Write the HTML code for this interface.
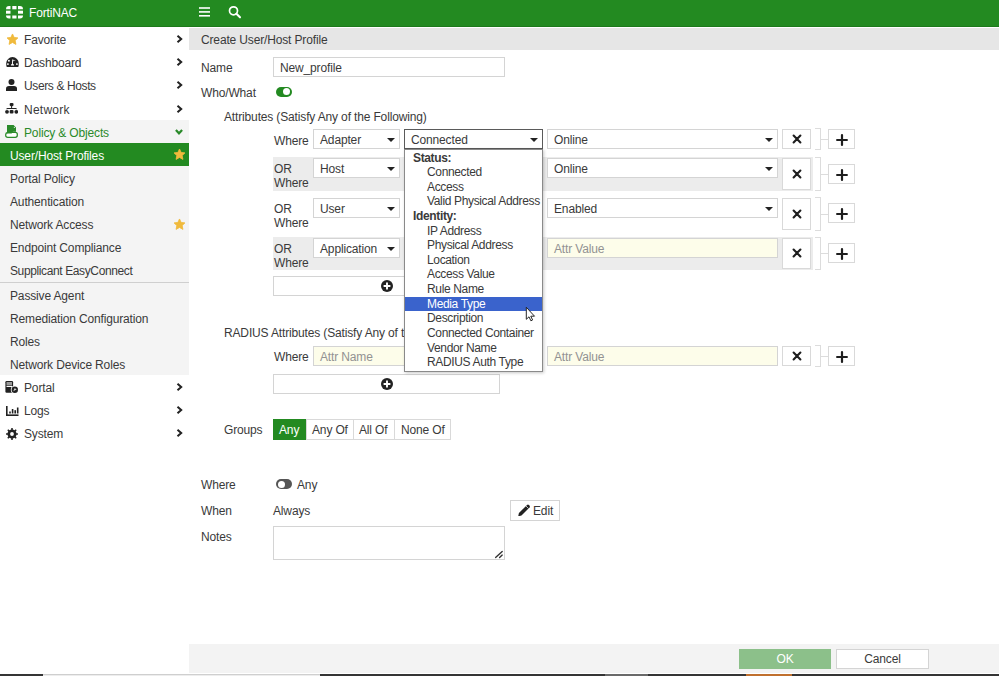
<!DOCTYPE html>
<html><head><meta charset="utf-8">
<style>
*{box-sizing:border-box;margin:0;padding:0}
html,body{width:999px;height:676px;overflow:hidden;background:#fff}
body{position:relative;font-family:"Liberation Sans",sans-serif;font-size:12px;color:#3a3a3a;letter-spacing:-0.15px}
.a{position:absolute}
.t{position:absolute;white-space:nowrap;line-height:14px}
#hdr{left:0;top:0;width:999px;height:27px;background:#238a21;border-bottom:1px solid #1d7a1b}
#side{left:0;top:28px;width:189px;height:648px;background:#fff}
.row{position:absolute;left:0;width:189px;height:23px}
.row .t{top:6px}
.sub{background:#f4f4f4}
.r1 .t{top:5px!important}
.chev{position:absolute;left:176px;top:8px;width:7px;height:8px}
.r1 .chev{top:7px}
.sel{background:#fff;border:1px solid #d4d4d4;position:absolute;height:20px}
.sel .t{top:3px;left:6px}
.caret{position:absolute;right:4px;top:8px;width:0;height:0;border-left:4px solid transparent;border-right:4px solid transparent;border-top:4px solid #222}
.inp{position:absolute;height:20px;border:1px solid #d4d4d4;background:#fdfdea}
.inp .t{top:3px;left:6px;color:#929292}
.xb{position:absolute;left:782px;width:29px;border:1px solid #d9d9d9;background:#fff}
.pb{position:absolute;left:828px;width:27px;height:20px;border:1px solid #d9d9d9;background:#fff}
.brk{position:absolute;left:815px;width:6px;border:1px solid #dcdcdc;border-left:none}
.mid{position:absolute;left:821px;width:7px;height:1px;background:#dcdcdc}
.grow{position:absolute;left:273px;width:540px;background:#ececec}
.dd .t{left:22px;font-size:12px;letter-spacing:-0.35px}
</style></head><body>

<!-- header -->
<div id="hdr" class="a">
  <svg class="a" style="left:5.5px;top:5.5px" width="17" height="13" viewBox="0 0 17 13">
    <g fill="#fff">
      <path d="M0 3.3 Q0 0 3 0 H4.5 V3.3Z"/>
      <rect x="6.3" y="0" width="4.2" height="3.3"/>
      <path d="M12 0 H13.8 Q17 0 17 3.3 H12Z"/>
      <rect x="0" y="4.7" width="4.5" height="3"/>
      <rect x="12" y="4.7" width="5" height="3"/>
      <path d="M0 9.5 H4.5 V12.5 H3 Q0 12.5 0 9.5Z"/>
      <rect x="6.3" y="9.5" width="4.2" height="3"/>
      <path d="M12 9.5 H17 Q17 12.5 14 12.5 H12Z"/>
    </g>
  </svg>
  <div class="t" style="left:29px;top:6px;color:#fff;font-size:12px">FortiNAC</div>
  <svg class="a" style="left:199px;top:7px" width="11" height="10" viewBox="0 0 11 10"><g fill="#fff"><rect x="0" y="0.2" width="11" height="1.6"/><rect x="0" y="4.1" width="11" height="1.6"/><rect x="0" y="8" width="11" height="1.6"/></g></svg>
  <svg class="a" style="left:228px;top:5px" width="14" height="14" viewBox="0 0 14 14"><circle cx="5.5" cy="5.8" r="4" fill="none" stroke="#fff" stroke-width="1.7"/><path d="M8.4 8.7 L12 12.3" stroke="#fff" stroke-width="2.1" stroke-linecap="round"/></svg>
</div>

<!-- sidebar -->
<div id="side" class="a"></div>
<div class="row r1" style="top:28px"><svg class="a" style="left:6px;top:5px" width="13" height="13" viewBox="0 0 24 24"><path stroke-linejoin="round" stroke-width="1.6" stroke="#f0ba3c" d="M12 1.8 L15 8.2 L22 9 L16.9 13.9 L18.3 21 L12 17.4 L5.7 21 L7.1 13.9 L2 9 L9 8.2Z" fill="#f0ba3c"/></svg><div class="t" style="left:24px">Favorite</div><svg class="chev" viewBox="0 0 7 8"><path d="M1.5 0.8 L5.2 4 L1.5 7.2" fill="none" stroke="#222" stroke-width="2"/></svg></div>
<div class="row r1" style="top:51px"><svg class="a" style="left:5.5px;top:6px" width="13" height="10" viewBox="0 0 13 10"><path d="M0.2 6.4 A6.3 6.3 0 0 1 12.8 6.4 Q12.8 8.6 12.2 10 H0.8 Q0.2 8.6 0.2 6.4Z" fill="#222"/><g fill="#fff"><circle cx="2.9" cy="3.7" r="0.95"/><circle cx="1.9" cy="7.1" r="0.95"/><circle cx="10.9" cy="7.1" r="0.95"/><path d="M6.2 2.4 L7.2 2.4 L6.9 6.8 Q8.2 7.4 8.1 8.6 H4.9 Q4.8 7.4 6 6.8Z"/><path d="M7 2.8 L9.8 3.6 L7 4.2Z" fill="#bbb"/></g></svg><div class="t" style="left:24px">Dashboard</div><svg class="chev" viewBox="0 0 7 8"><path d="M1.5 0.8 L5.2 4 L1.5 7.2" fill="none" stroke="#222" stroke-width="2"/></svg></div>
<div class="row r1" style="top:74px"><svg class="a" style="left:6px;top:5px" width="11" height="12" viewBox="0 0 11 12"><circle cx="5.5" cy="3" r="3" fill="#222"/><path d="M0 12 V9.5 Q0 7 3 7 H8 Q11 7 11 9.5 V12Z" fill="#222"/></svg><div class="t" style="left:24px;letter-spacing:-0.38px">Users &amp; Hosts</div><svg class="chev" viewBox="0 0 7 8"><path d="M1.5 0.8 L5.2 4 L1.5 7.2" fill="none" stroke="#222" stroke-width="2"/></svg></div>
<div class="row" style="top:97px"><svg class="a" style="left:5px;top:5px" width="13" height="12" viewBox="0 0 13 12"><g fill="#222"><rect x="4.7" y="0.9" width="3.8" height="3.3" rx="1.1"/><rect x="6.1" y="4" width="1" height="2.5"/><path d="M1.3 7.3 Q1.3 6 2.6 6 H10.6 Q11.9 6 11.9 7.3 H10.9 Q10.9 7 10.6 7 H2.6 Q2.3 7 2.3 7.3Z"/><circle cx="2" cy="9.8" r="1.9"/><rect x="4.7" y="8" width="3.8" height="3.5" rx="1.1"/><circle cx="11.3" cy="9.8" r="1.9"/></g></svg><div class="t" style="left:24px;letter-spacing:0.25px">Network</div><svg class="chev" viewBox="0 0 7 8"><path d="M1.5 0.8 L5.2 4 L1.5 7.2" fill="none" stroke="#222" stroke-width="2"/></svg></div>
<div class="row sub" style="top:120px"><svg class="a" style="left:5px;top:5px" width="13" height="13" viewBox="0 0 13 13"><path d="M3 7.3 H10.3 Q12.3 7.3 12.3 9.3 V10.3 Q12.3 12.3 10.3 12.3 H2.7 Q0.7 12.3 0.7 10.3 V9.8 Q0.7 8 2.5 7.5" fill="#fff" stroke="#2a8a2a" stroke-width="1.3"/><path d="M2 0 H8.6 L11 2.4 V6.8 H8.2 Q7.6 6.8 7.2 7.6 L6.7 8.5 H2Z" fill="#2a8a2a"/><circle cx="9.4" cy="2.4" r="0.6" fill="#cfe8cf"/></svg><div class="t" style="left:24px;color:#2a8a2a">Policy &amp; Objects</div><svg class="chev" style="left:175px;top:9px;width:8px;height:6px" viewBox="0 0 8 6"><path d="M0.9 1 L4 4.3 L7.1 1" fill="none" stroke="#2a8a2a" stroke-width="2.2"/></svg></div>
<div class="row" style="top:143px;background:#238a21"><div class="t" style="left:10px;color:#fff">User/Host Profiles</div><svg class="a" style="left:173px;top:5px" width="13" height="13" viewBox="0 0 24 24"><path stroke-linejoin="round" stroke-width="1.6" stroke="#f0ba3c" d="M12 1.8 L15 8.2 L22 9 L16.9 13.9 L18.3 21 L12 17.4 L5.7 21 L7.1 13.9 L2 9 L9 8.2Z" fill="#f0ba3c"/></svg></div>
<div class="row sub" style="top:166px"><div class="t" style="left:10px">Portal Policy</div></div>
<div class="row sub" style="top:189px"><div class="t" style="left:10px">Authentication</div></div>
<div class="row sub" style="top:212px"><div class="t" style="left:10px">Network Access</div><svg class="a" style="left:173px;top:6px" width="13" height="13" viewBox="0 0 24 24"><path stroke-linejoin="round" stroke-width="1.6" stroke="#f0ba3c" d="M12 1.8 L15 8.2 L22 9 L16.9 13.9 L18.3 21 L12 17.4 L5.7 21 L7.1 13.9 L2 9 L9 8.2Z" fill="#f0ba3c"/></svg></div>
<div class="row sub" style="top:235px"><div class="t" style="left:10px">Endpoint Compliance</div></div>
<div class="row sub" style="top:258px"><div class="t" style="left:10px;letter-spacing:-0.38px">Supplicant EasyConnect</div></div>
<div class="row sub" style="top:281px;height:2px;border-bottom:1px solid #cfcfcf"></div>
<div class="row sub" style="top:283px"><div class="t" style="left:10px">Passive Agent</div></div>
<div class="row sub" style="top:306px"><div class="t" style="left:10px">Remediation Configuration</div></div>
<div class="row sub" style="top:329px"><div class="t" style="left:10px">Roles</div></div>
<div class="row sub" style="top:352px"><div class="t" style="left:10px">Network Device Roles</div></div>
<div class="row" style="top:375px"><svg class="a" style="left:5px;top:5px" width="14" height="14" viewBox="0 0 14 14"><rect x="0.4" y="1" width="7.7" height="11.7" rx="1.2" fill="#222"/><rect x="1.5" y="2" width="5.5" height="3.5" fill="#9a9a9a"/><rect x="1.5" y="6" width="5.5" height="1" fill="#fff"/><circle cx="9.8" cy="9.8" r="4" fill="#fff"/><circle cx="9.8" cy="9.8" r="3.2" fill="#222"/><path d="M8.3 11.3 L9.6 8.2 L11.6 9.2Z" fill="#ddd"/></svg><div class="t" style="left:24px">Portal</div><svg class="chev" viewBox="0 0 7 8"><path d="M1.5 0.8 L5.2 4 L1.5 7.2" fill="none" stroke="#222" stroke-width="2"/></svg></div>
<div class="row" style="top:398px"><svg class="a" style="left:5.5px;top:7.5px" width="13" height="10" viewBox="0 0 13 10"><g fill="#222"><rect x="0" y="0" width="1.6" height="10"/><rect x="0" y="8.4" width="12.5" height="1.6"/><rect x="3.2" y="5.5" width="1.6" height="2"/><rect x="5.8" y="3" width="1.6" height="4.5"/><rect x="8.4" y="4.2" width="1.6" height="3.3"/><rect x="10.9" y="1.5" width="1.6" height="6"/></g></svg><div class="t" style="left:24px">Logs</div><svg class="chev" viewBox="0 0 7 8"><path d="M1.5 0.8 L5.2 4 L1.5 7.2" fill="none" stroke="#222" stroke-width="2"/></svg></div>
<div class="row" style="top:421px"><svg class="a" style="left:5.5px;top:6.5px" width="12" height="12" viewBox="0 0 12 12"><path fill="#222" fill-rule="evenodd" d="M10.53 5.21 L11.95 5.25 L11.95 6.75 L10.53 6.79 L9.76 8.65 L10.74 9.68 L9.68 10.74 L8.65 9.76 L6.79 10.53 L6.75 11.95 L5.25 11.95 L5.21 10.53 L3.35 9.76 L2.32 10.74 L1.26 9.68 L2.24 8.65 L1.47 6.79 L0.05 6.75 L0.05 5.25 L1.47 5.21 L2.24 3.35 L1.26 2.32 L2.32 1.26 L3.35 2.24 L5.21 1.47 L5.25 0.05 L6.75 0.05 L6.79 1.47 L8.65 2.24 L9.68 1.26 L10.74 2.32 L9.76 3.35Z M7.90 6.0 A1.9 1.9 0 1 0 4.10 6.0 A1.9 1.9 0 1 0 7.90 6.0Z"/></svg><div class="t" style="left:24px">System</div><svg class="chev" viewBox="0 0 7 8"><path d="M1.5 0.8 L5.2 4 L1.5 7.2" fill="none" stroke="#222" stroke-width="2"/></svg></div>

<div class="a" style="left:189px;top:28px;width:810px;height:22px;background:#e6e6e6"><div class="t" style="left:12px;top:5px">Create User/Host Profile</div></div>
<div class="t" style="left:201px;top:61px">Name</div>
<div class="a" style="left:273px;top:57px;width:232px;height:20px;border:1px solid #d4d4d4"><div class="t" style="left:6px;top:3px">New_profile</div></div>
<div class="t" style="left:201px;top:86px">Who/What</div>
<div class="a" style="left:276px;top:86.5px;width:16px;height:10px;border-radius:5px;background:#238a21"><div class="a" style="left:7px;top:1.5px;width:7px;height:7px;border-radius:50%;background:#fff"></div></div>
<div class="t" style="left:224px;top:110px">Attributes (Satisfy Any of the Following)</div>
<div class="t" style="left:274px;top:133.5px">Where</div>
<div class="sel" style="left:313px;top:129px;width:87px;height:20px;border-color:#d4d4d4"><div class="t">Adapter</div><div class="caret"></div></div>
<div class="sel" style="left:404px;top:129px;width:139px;height:20px;border-color:#5a5a5a"><div class="t">Connected</div><div class="caret"></div></div>
<div class="sel" style="left:547px;top:129px;width:231px;height:20px;border-color:#d4d4d4"><div class="t">Online</div><div class="caret"></div></div>
<div class="xb" style="top:129px;height:20px"><svg class="a" style="left:9px;top:4px" width="10" height="10" viewBox="0 0 10 10"><path d="M1.6 1.6 L8.4 8.4 M8.4 1.6 L1.6 8.4" stroke="#1e1e1e" stroke-width="2.1" stroke-linecap="round"/></svg></div><div class="brk" style="top:128px;height:22px"></div><div class="mid" style="top:139px"></div><div class="pb" style="top:129px"><svg class="a" style="left:7px;top:4px" width="12" height="12" viewBox="0 0 12 12"><path d="M6 1.1 V10.9 M1.1 6 H10.9" stroke="#1e1e1e" stroke-width="2.2" stroke-linecap="round"/></svg></div>
<div class="grow" style="top:157px;height:34px"></div>
<div class="t" style="left:274px;top:163px;line-height:13.6px">OR<br>Where</div>
<div class="sel" style="left:313px;top:158px;width:87px;height:20px;border-color:#d4d4d4"><div class="t">Host</div><div class="caret"></div></div>
<div class="sel" style="left:547px;top:158px;width:231px;height:20px;border-color:#d4d4d4"><div class="t">Online</div><div class="caret"></div></div>
<div class="xb" style="top:158px;height:32px"><svg class="a" style="left:9px;top:10px" width="10" height="10" viewBox="0 0 10 10"><path d="M1.6 1.6 L8.4 8.4 M8.4 1.6 L1.6 8.4" stroke="#1e1e1e" stroke-width="2.1" stroke-linecap="round"/></svg></div><div class="brk" style="top:157px;height:34px"></div><div class="mid" style="top:174px"></div><div class="pb" style="top:164px"><svg class="a" style="left:7px;top:4px" width="12" height="12" viewBox="0 0 12 12"><path d="M6 1.1 V10.9 M1.1 6 H10.9" stroke="#1e1e1e" stroke-width="2.2" stroke-linecap="round"/></svg></div>
<div class="t" style="left:274px;top:203px;line-height:13.6px">OR<br>Where</div>
<div class="sel" style="left:313px;top:198px;width:87px;height:20px;border-color:#d4d4d4"><div class="t">User</div><div class="caret"></div></div>
<div class="sel" style="left:547px;top:198px;width:231px;height:20px;border-color:#d4d4d4"><div class="t">Enabled</div><div class="caret"></div></div>
<div class="xb" style="top:198px;height:32px"><svg class="a" style="left:9px;top:10px" width="10" height="10" viewBox="0 0 10 10"><path d="M1.6 1.6 L8.4 8.4 M8.4 1.6 L1.6 8.4" stroke="#1e1e1e" stroke-width="2.1" stroke-linecap="round"/></svg></div><div class="brk" style="top:197px;height:34px"></div><div class="mid" style="top:214px"></div><div class="pb" style="top:203px"><svg class="a" style="left:7px;top:4px" width="12" height="12" viewBox="0 0 12 12"><path d="M6 1.1 V10.9 M1.1 6 H10.9" stroke="#1e1e1e" stroke-width="2.2" stroke-linecap="round"/></svg></div>
<div class="grow" style="top:237px;height:33px"></div>
<div class="t" style="left:274px;top:243px;line-height:13.6px">OR<br>Where</div>
<div class="sel" style="left:313px;top:238px;width:87px;height:20px;border-color:#d4d4d4"><div class="t">Application</div><div class="caret"></div></div>
<div class="inp" style="left:547px;top:238px;width:231px"><div class="t">Attr Value</div></div>
<div class="xb" style="top:238px;height:31px"><svg class="a" style="left:9px;top:9px" width="10" height="10" viewBox="0 0 10 10"><path d="M1.6 1.6 L8.4 8.4 M8.4 1.6 L1.6 8.4" stroke="#1e1e1e" stroke-width="2.1" stroke-linecap="round"/></svg></div><div class="brk" style="top:237px;height:33px"></div><div class="mid" style="top:253px"></div><div class="pb" style="top:243px"><svg class="a" style="left:7px;top:4px" width="12" height="12" viewBox="0 0 12 12"><path d="M6 1.1 V10.9 M1.1 6 H10.9" stroke="#1e1e1e" stroke-width="2.2" stroke-linecap="round"/></svg></div>
<div class="a" style="left:273px;top:276px;width:227px;height:20px;border:1px solid #d4d4d4"><svg class="a" style="left:107px;top:3px" width="12" height="12" viewBox="0 0 12 12"><circle cx="6" cy="6" r="6" fill="#222"/><path d="M6 2.6 V9.4 M2.6 6 H9.4" stroke="#fff" stroke-width="1.9"/></svg></div>
<div class="t" style="left:224px;top:326px">RADIUS Attributes (Satisfy Any of the Following)</div>
<div class="t" style="left:274px;top:350px">Where</div>
<div class="inp" style="left:313px;top:346px;width:230px"><div class="t">Attr Name</div></div>
<div class="inp" style="left:547px;top:346px;width:231px"><div class="t">Attr Value</div></div>
<div class="xb" style="top:346px;height:20px"><svg class="a" style="left:9px;top:4px" width="10" height="10" viewBox="0 0 10 10"><path d="M1.6 1.6 L8.4 8.4 M8.4 1.6 L1.6 8.4" stroke="#1e1e1e" stroke-width="2.1" stroke-linecap="round"/></svg></div><div class="brk" style="top:345px;height:22px"></div><div class="mid" style="top:356px"></div><div class="pb" style="top:346px"><svg class="a" style="left:7px;top:4px" width="12" height="12" viewBox="0 0 12 12"><path d="M6 1.1 V10.9 M1.1 6 H10.9" stroke="#1e1e1e" stroke-width="2.2" stroke-linecap="round"/></svg></div>
<div class="a" style="left:273px;top:374px;width:227px;height:20px;border:1px solid #d4d4d4"><svg class="a" style="left:107px;top:3px" width="12" height="12" viewBox="0 0 12 12"><circle cx="6" cy="6" r="6" fill="#222"/><path d="M6 2.6 V9.4 M2.6 6 H9.4" stroke="#fff" stroke-width="1.9"/></svg></div>
<div class="t" style="left:224px;top:423px">Groups</div>
<div class="a" style="left:273px;top:419px;width:178px;height:21px;border:1px solid #d9d9d9;background:#fff"></div>
<div class="a" style="left:273px;top:419px;width:33px;height:21px;background:#238a21"><div class="t" style="left:6px;top:4px;color:#fff">Any</div></div>
<div class="a" style="left:306px;top:419px;width:1px;height:21px;background:#d9d9d9"></div>
<div class="t" style="left:312px;top:423px">Any Of</div>
<div class="a" style="left:353px;top:419px;width:1px;height:21px;background:#d9d9d9"></div>
<div class="t" style="left:359px;top:423px">All Of</div>
<div class="a" style="left:394px;top:419px;width:1px;height:21px;background:#d9d9d9"></div>
<div class="t" style="left:401px;top:423px">None Of</div>
<div class="t" style="left:201px;top:478px">Where</div>
<div class="a" style="left:276px;top:479px;width:16px;height:10px;border-radius:5px;background:#555"><div class="a" style="left:1.5px;top:1.5px;width:7px;height:7px;border-radius:50%;background:#fff"></div></div>
<div class="t" style="left:297px;top:478px">Any</div>
<div class="t" style="left:201px;top:504px">When</div>
<div class="t" style="left:273px;top:504px">Always</div>
<div class="a" style="left:510px;top:500px;width:50px;height:21px;border:1px solid #d4d4d4;background:#fff"><svg class="a" style="left:7px;top:3px" width="12" height="12" viewBox="0 0 12 12"><path d="M0.2 12.3 L0.93 9.03 L9.03 0.93 Q10 0.2 10.9 0.9 L11.5 1.5 Q12.2 2.5 11.57 3.47 L3.47 11.57Z" fill="#222"/><path d="M8 2 L10.5 4.5" stroke="#fff" stroke-width="0.7"/></svg><div class="t" style="left:22px;top:3px">Edit</div></div>
<div class="t" style="left:201px;top:530px">Notes</div>
<div class="a" style="left:273px;top:526px;width:232px;height:34px;border:1px solid #d4d4d4"><svg class="a" style="left:220px;top:22px" width="10" height="10" viewBox="0 0 10 10"><path d="M1.6 8.4 L8.2 2.4 M5.6 8.5 L8.2 6.1" stroke="#333" stroke-width="1.4" stroke-linecap="round"/></svg></div>
<div class="a" style="left:189px;top:644px;width:810px;height:29px;background:#f3f3f3"></div>
<div class="a" style="left:739px;top:649px;width:92px;height:20px;background:#8cc08a"><div class="t" style="left:0;width:92px;text-align:center;top:3px;color:#fff">OK</div></div>
<div class="a" style="left:836px;top:649px;width:93px;height:20px;background:#fff;border:1px solid #d4d4d4"><div class="t" style="left:0;width:91px;text-align:center;top:2px">Cancel</div></div>
<div class="a" style="left:189px;top:673px;width:810px;height:1px;background:#fff"></div>
<div class="a" style="left:0;top:674px;width:999px;height:2px;background:#353535"></div>
<div class="a" style="left:43px;top:674px;width:277px;height:1px;background:#cfcfcf"></div>
<div class="a" style="left:43px;top:675px;width:277px;height:1px;background:#ededed"></div>
<div class="a" style="left:605px;top:674px;width:43px;height:2px;background:#6a6a6a"></div>
<div class="a" style="left:746px;top:674px;width:46px;height:2px;background:#c0702e"></div>
<div class="a dd" style="left:404px;top:149px;width:139px;height:223px;background:#fff;border:1px solid #8a8a8a;box-shadow:1px 1px 3px rgba(0,0,0,0.22)"><div class="t" style="left:8px;top:0.50px;font-weight:bold">Status:</div><div class="t" style="top:15.12px">Connected</div><div class="t" style="top:29.74px">Access</div><div class="t" style="top:44.36px">Valid Physical Address</div><div class="t" style="left:8px;top:58.98px;font-weight:bold">Identity:</div><div class="t" style="top:73.60px">IP Address</div><div class="t" style="top:88.22px">Physical Address</div><div class="t" style="top:102.84px">Location</div><div class="t" style="top:117.46px">Access Value</div><div class="t" style="top:132.08px">Rule Name</div><div class="a" style="left:0;top:146.70px;width:137px;height:14.6px;background:#3a63cc"></div><div class="t" style="top:146.70px;color:#fff">Media Type</div><div class="t" style="top:161.32px">Description</div><div class="t" style="top:175.94px">Connected Container</div><div class="t" style="top:190.56px">Vendor Name</div><div class="t" style="top:205.18px">RADIUS Auth Type</div></div>
<svg class="a" style="left:525px;top:306px" width="12" height="17" viewBox="0 0 12 17"><path d="M1.3 1.3 V13.3 L4 10.8 L5.9 14.8 L7.6 14 L5.8 10.2 H9.5Z" fill="#fff" stroke="#1a1a1a" stroke-width="0.95" stroke-linejoin="miter"/></svg>
</body></html>
